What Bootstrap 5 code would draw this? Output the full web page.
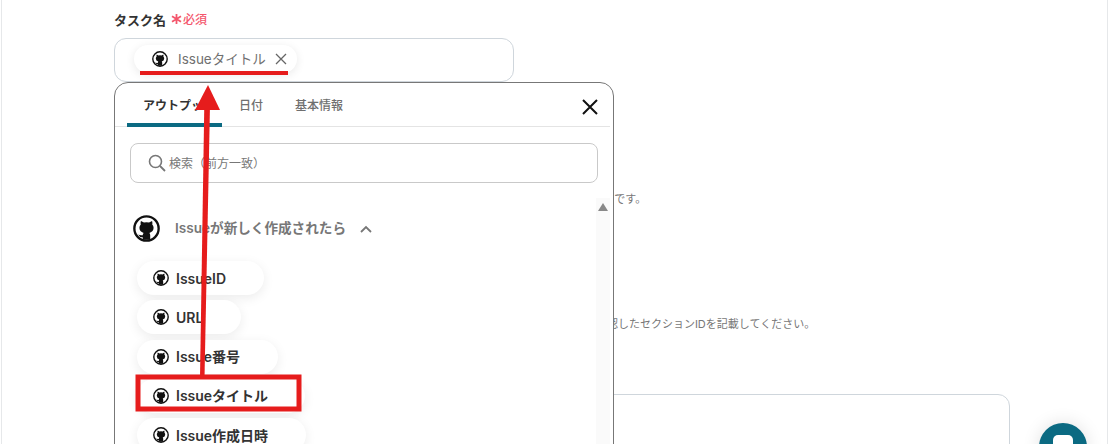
<!DOCTYPE html>
<html lang="ja">
<head>
<meta charset="utf-8">
<title>タスク名</title>
<link href="https://cdn.jsdelivr.net/npm/bootstrap@5.3.0/dist/css/bootstrap.min.css" rel="stylesheet">
<style>
html,body{height:444px;overflow:hidden;background:#fff}
body{font-family:Inter,"Noto Sans CJK JP",sans-serif;color:#333;position:relative}
.sheet{height:444px;margin:0 1px;border-left:1px solid #e6e8ea;border-right:1px solid #e6e8ea;padding:12px 0 0 112px;overflow:hidden}
.lbl{font-size:13px;font-weight:600;line-height:16px;height:26px;color:#333;display:flex;align-items:flex-start}
.req{color:#f4566c;font-size:12px;font-weight:500;margin-left:4px}
.req-star{display:inline-block;width:13px;height:12px;margin-right:0;vertical-align:-1px}
.tagbox{width:400px;height:44px;border:1px solid #cfd6dc;border-radius:12px;padding:6px 19px}
.gh{display:block;flex:none}
.chip{display:inline-flex;align-items:center;height:28px;width:163px;padding-left:18px;border-radius:14px;background:#fff;box-shadow:0 2px 10px rgba(0,0,0,.09);font-size:13.5px;color:#707070}
.chip .gh{margin-right:10px}
.chip svg.cross{margin-left:8px}
.hint{font-size:11px;line-height:16px;color:#777;white-space:nowrap}
.hint1{margin-top:109px}
.hint2{margin-top:109px;word-spacing:2px}
.areabox{width:896px;height:120px;margin-top:62px;border:1px solid #cfd6dc;border-radius:12px}
.popup{position:absolute;left:114px;top:82px;width:500px;height:400px;background:#fff;border:1px solid #777;border-radius:14px;overflow:hidden}
.tabbar{height:44px;margin-right:3px;border-bottom:1px solid #e4e4e4;padding-left:12px}
.tabitem{font-size:12px;font-weight:500;color:#6f6f6f;height:44px;line-height:46px;white-space:nowrap}
.tabitem.on{width:95px;padding-left:16px;overflow:hidden;color:#333;font-weight:600;border-bottom:4px solid #0b6a82;border-radius:5px 5px 0 0}
.tab2{margin-left:17px}
.tab3{margin-left:32px}
.closer{margin-left:auto;margin-right:12px;margin-top:16px;display:block}
.searchline{height:40px;margin:16px 15px 0;border:1px solid #c9c9c9;border-radius:8px;padding-left:17px;gap:3px;font-size:12px;color:#777}
.searchline span{padding-top:2px}
.panelbody{position:relative;height:300px;padding:32px 0 0 18px}
.sbar{position:absolute;right:3px;top:15px;width:14px;height:400px;background:#fafafa}
.sup{display:block;margin:5px auto 0}
.grouphead{height:27px;font-size:13.6px;font-weight:600;color:#777;margin-bottom:19px}
.grouphead .gh{margin-right:15px}
.grouphead .chev{margin-left:14px}
.pill{display:flex;align-items:center;height:34px;border-radius:17px;background:#fff;box-shadow:0 3px 12px rgba(0,0,0,.08);margin:0 0 5.3px 4px;padding-left:16px;gap:7px;font-size:14px;font-weight:600;color:#333;white-space:nowrap}
.w1{width:127px}.w2{width:104px}.w3{width:141px}.w4{width:168px}.w5{width:169px}
.overlay{position:absolute;left:0;top:0;width:1109px;height:444px;pointer-events:none}
.fab{position:absolute;left:1039px;top:423px;width:48px;height:48px;border-radius:50%;background:#0b6a82;box-shadow:0 0 18px rgba(0,0,0,.12)}
.fab-in{display:block;width:20px;height:22px;margin:12px auto 0;background:#fff;border-radius:5px}
</style>
</head>
<body>
<svg width="0" height="0" class="position-absolute">
  <symbol id="gh" viewBox="0 0 16 16">
    <circle cx="8" cy="8" r="7.2" fill="#fff" stroke="#111" stroke-width="1.4"/>
    <path fill="#111" d="M4.7 3.5 6.5 4.5Q8 4.2 9.5 4.5L11.3 3.5Q11.7 4.7 11.4 5.6 12.2 6.4 12.2 7.6 12.2 10 9.7 10.6 10.2 11.1 10.2 12V14.7H5.8V13.2Q4 13.5 3.1 11.6 4.1 12.2 5.8 12V11.9Q5.8 11.1 6.3 10.6 3.8 10 3.8 7.6 3.8 6.4 4.6 5.6 4.3 4.7 4.7 3.5Z"/>
  </symbol>
</svg>

<div class="sheet">
  <div class="lbl">タスク名<span class="req"><svg class="req-star" viewBox="0 0 13 12"><path d="M6.5 1V11M2 3.2 11 8.8M11 3.2 2 8.8" stroke="#f4566c" stroke-width="1.8" fill="none"/></svg>必須</span></div>
  <div class="tagbox">
    <span class="chip">
      <svg class="gh" width="16" height="16"><use href="#gh"/></svg>Issueタイトル
      <svg class="cross" width="14" height="14" viewBox="0 0 14 14"><path d="M2 2 12 12M12 2 2 12" stroke="#666" stroke-width="1.3" fill="none"/></svg>
    </span>
  </div>
  <div class="hint hint1">作成するタスクの名前を入力してください。アウトプットを利用すると 前の 取得値を反映できる項目です。</div>
  <div class="hint hint2">タスクを追加するセクションのIDを入力してください。プロジェクトの URL などからあらかじめ確認したセクションIDを記載してください。</div>
  <div class="areabox"></div>
</div>

<div class="popup">
  <div class="tabbar d-flex">
    <div class="tabitem on">アウトプット</div>
    <div class="tabitem tab2">日付</div>
    <div class="tabitem tab3">基本情報</div>
    <svg class="closer" width="16" height="16" viewBox="0 0 16 16"><path d="M1 1 15 15M15 1 1 15" stroke="#111" stroke-width="2" fill="none"/></svg>
  </div>
  <div class="searchline d-flex align-items-center">
    <svg width="18" height="18" viewBox="0 0 18 18"><circle cx="7.5" cy="7.5" r="6" fill="none" stroke="#777" stroke-width="1.6"/><path d="M12 12 17 17" stroke="#777" stroke-width="1.8"/></svg>
    <span>検索（前方一致）</span>
  </div>
  <div class="panelbody">
    <div class="sbar"><svg class="sup" width="10" height="8" viewBox="0 0 10 8"><path d="M5 0 10 8H0Z" fill="#888"/></svg></div>
    <div class="grouphead d-flex align-items-center">
      <svg class="gh" width="27" height="27"><use href="#gh"/></svg>
      <span>Issueが新しく作成されたら</span>
      <svg class="chev" width="12" height="8" viewBox="0 0 12 8"><path d="M1 7 6 2 11 7" stroke="#777" stroke-width="1.8" fill="none"/></svg>
    </div>
    <div class="pill w1"><svg class="gh" width="16" height="16"><use href="#gh"/></svg>IssueID</div>
    <div class="pill w2"><svg class="gh" width="16" height="16"><use href="#gh"/></svg>URL</div>
    <div class="pill w3"><svg class="gh" width="16" height="16"><use href="#gh"/></svg>Issue番号</div>
    <div class="pill w4"><svg class="gh" width="16" height="16"><use href="#gh"/></svg>Issueタイトル</div>
    <div class="pill w5"><svg class="gh" width="16" height="16"><use href="#gh"/></svg>Issue作成日時</div>
  </div>
</div>

<svg class="overlay" viewBox="0 0 1109 444">
  <rect x="140" y="71" width="148" height="4" fill="#e61c1c"/>
  <path d="M200 378H204.5L210 105H204.3Z" fill="#e61c1c"/>
  <path d="M208 85 220 110H195Z" fill="#e61c1c"/>
  <rect x="138" y="377" width="161" height="32" fill="none" stroke="#e61c1c" stroke-width="5"/>
</svg>

<div class="fab"><span class="fab-in"></span></div>
</body>
</html>
